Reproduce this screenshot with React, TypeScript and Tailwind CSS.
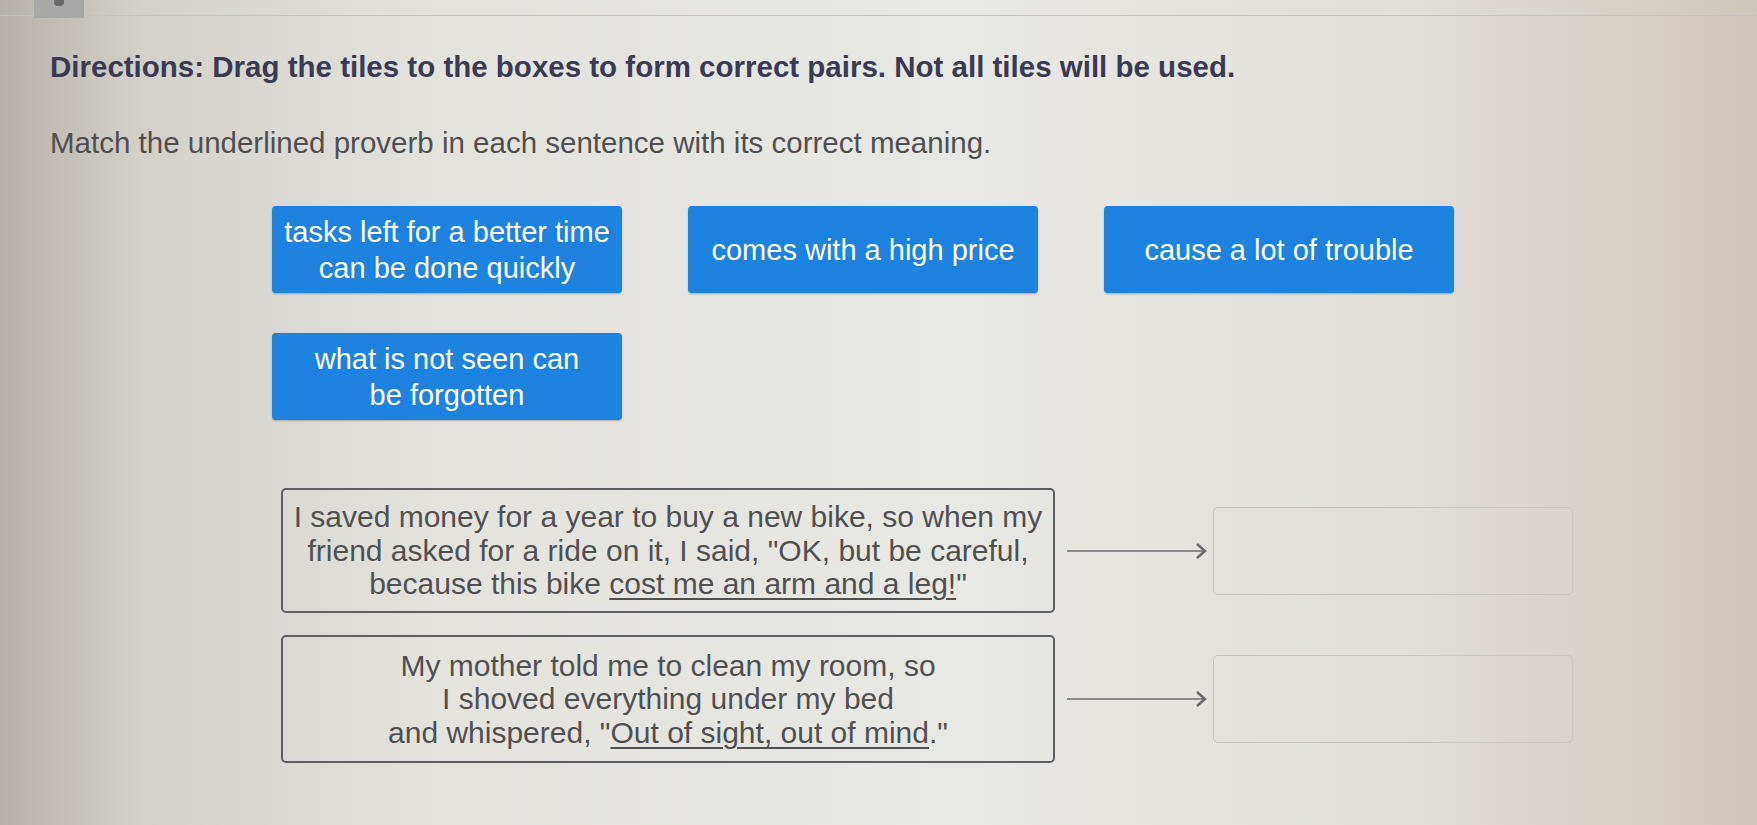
import React from 'react';

const tiles = [
  ['tasks left for a better time', 'can be done quickly'],
  ['comes with a high price'],
  ['cause a lot of trouble'],
  ['what is not seen can', 'be forgotten'],
];

const Tile: React.FC<{ lines: string[] }> = ({ lines }) => (
  <div className="w-[350px] h-[87px] rounded-[4px] bg-[#1d82e0] shadow-[0_1px_2px_rgba(0,0,0,0.25)] flex flex-col items-center justify-center text-[29px] leading-[36px] text-white">
    {lines.map((l, i) => (
      <span key={i} className="whitespace-nowrap">{l}</span>
    ))}
  </div>
);

const Arrow = () => (
  <svg width="150" height="20" viewBox="0 0 150 20" className="shrink-0">
    <line x1="8" y1="10" x2="146" y2="10" stroke="#8a8a8a" strokeWidth="2" />
    <polyline points="138,3 146,10 138,17" fill="none" stroke="#6a6a6a" strokeWidth="2.5" />
  </svg>
);

const PairRow: React.FC<{ children: React.ReactNode; h: string }> = ({ children, h }) => (
  <div className="flex items-center">
    <div className={`w-[774px] ${h} rounded-[5px] border-2 border-[#5e5e62] flex flex-col items-center justify-center text-[30px] leading-[33.5px] text-[#505052] text-center whitespace-nowrap`}>
      {children}
    </div>
    <div className="w-[158px] flex justify-center">
      <Arrow />
    </div>
    <div className="w-[360px] h-[88px] rounded-[5px] border border-[#c9c6bf]" />
  </div>
);

export default function App() {
  return (
    <div
      className="w-[1757px] h-[825px] overflow-hidden bg-[linear-gradient(90deg,#b7b2aa_0%,#d3d0c9_8%,#e4e3de_25%,#e8e8e4_55%,#e2dfd8_80%,#cdc6bb_100%)]"
      style={{ fontFamily: '"Liberation Sans", Arial, sans-serif' }}
    >
      <div className="relative h-[16px] border-b border-[#c4c2bd]">
        <div className="absolute left-[34px] top-0 w-[50px] h-[18px] bg-[#a9a8a8] flex justify-center">
          <div className="w-[10px] h-[8px] rounded-full bg-[#6a6a6c] mt-[-2px]" />
        </div>
      </div>

      <div className="pl-[50px] pt-[34px]">
        <p className="text-[29.5px] font-bold text-[#3a3b52] leading-[34px] whitespace-nowrap">
          Directions: Drag the tiles to the boxes to form correct pairs. Not all tiles will be used.
        </p>
        <p className="mt-[42px] text-[29.5px] text-[#4f4f51] leading-[34px] whitespace-nowrap">
          Match the underlined proverb in each sentence with its correct meaning.
        </p>
      </div>

      <div className="pl-[272px] pt-[46px] grid grid-cols-[350px_350px_350px] gap-x-[66px] gap-y-[40px] w-max">
        {tiles.map((t, i) => (
          <Tile key={i} lines={t} />
        ))}
      </div>

      <div className="pl-[281px] pt-[68px] flex flex-col gap-[22px]">
        <PairRow h="h-[125px]">
          <span>I saved money for a year to buy a new bike, so when my</span>
          <span>friend asked for a ride on it, I said, "OK, but be careful,</span>
          <span>
            because this bike <span className="underline decoration-2 underline-offset-4">cost me an arm and a leg!</span>"
          </span>
        </PairRow>
        <PairRow h="h-[128px]">
          <span>My mother told me to clean my room, so</span>
          <span>I shoved everything under my bed</span>
          <span>
            and whispered, "<span className="underline decoration-2 underline-offset-4">Out of sight, out of mind</span>."
          </span>
        </PairRow>
      </div>
    </div>
  );
}
